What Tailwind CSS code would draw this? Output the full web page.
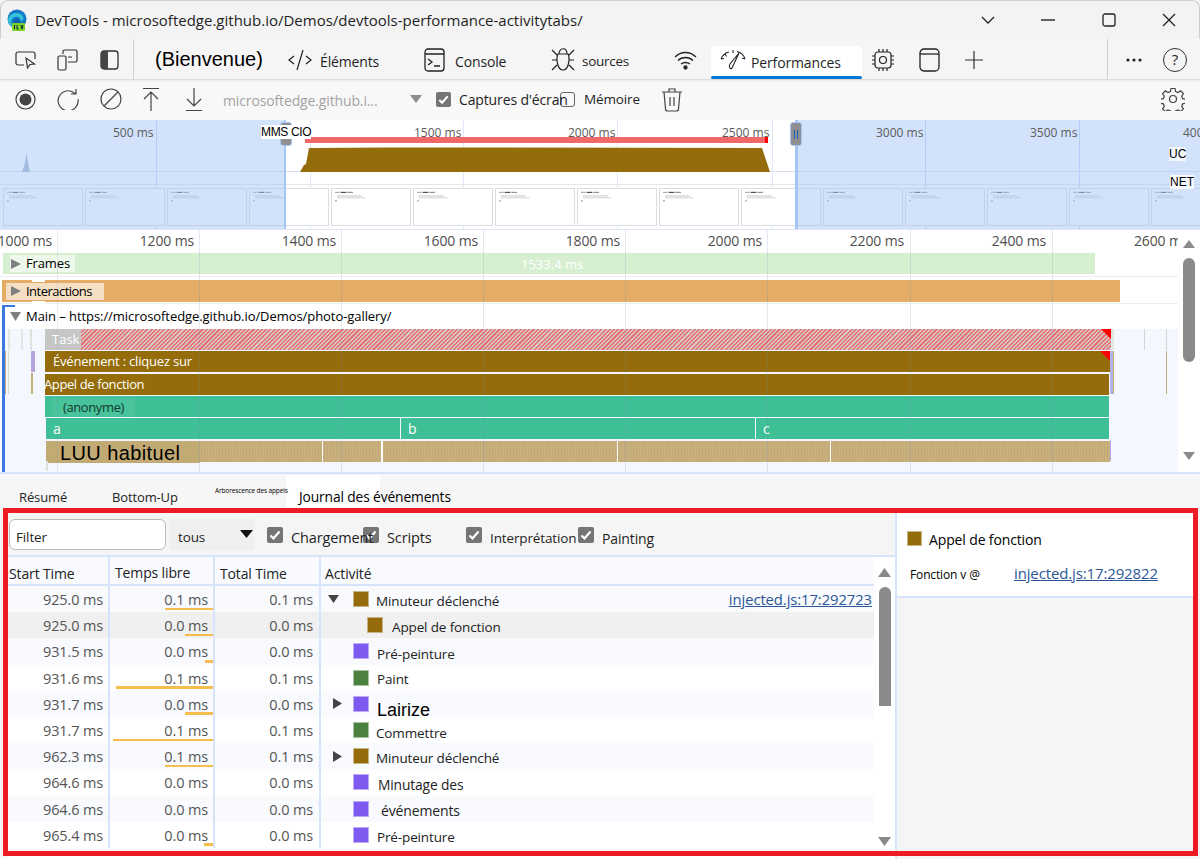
<!DOCTYPE html>
<html lang="fr"><head><meta charset="utf-8"><title>DevTools</title>
<script src="https://cdn.jsdelivr.net/npm/@tailwindcss/browser@4"></script></head>
<body class="m-0 bg-white">
<svg class="absolute w-0 h-0"><defs>
<symbol id="t" viewBox="0 0 80 38"><rect x="2" y="3" width="5" height="1" fill="#999"/><rect x="8" y="3" width="6" height="1" fill="#222"/><rect x="15" y="3" width="6" height="1" fill="#777"/><rect x="4" y="7" width="26" height=".7" fill="#aaa"/><rect x="4" y="9" width="30" height=".7" fill="#bbb"/><rect x="2" y="12" width="2" height="1" fill="#888"/></symbol>
<symbol id="ck" viewBox="0 0 16 16"><path d="M3.5 8.5l3 3 6-7" fill="none" stroke="#fff" stroke-width="2.2"/></symbol>
</defs></svg>
<div class="relative w-[1200px] h-[859px] overflow-hidden flex flex-col bg-[#f5f5f5] font-['Open_Sans',sans-serif] text-[#1f1f1f] border-[#c9c9c9]">

<!-- title bar -->
<div class="h-[39px] shrink-0 flex items-center bg-[#f3f3f3] rounded-t-lg border-t border-x border-[#cfcfcf]">
 <svg class="ml-[6px] w-[20px] h-[22px] shrink-0" viewBox="0 0 20 22"><circle cx="10" cy="10" r="9.5" fill="#1279c9"/><path d="M1 11C2 4 10 2 15 6c3 3 1 6-2 6 1-3-2-5-5-4-4 1-5 6-2 10C3 17 1 14 1 11z" fill="#35c1d8"/><path d="M8 10c3-1 5 0 5 2-1 2 2 3 5 1-1 3-4 6-8 6-4-1-5-6-2-9z" fill="#0f5fae"/><rect x="5" y="14" width="13" height="8" rx="1" fill="#7bd32a"/><path d="M7.500 16v4M10 16v4h1.500M14 16l1 4 1-4" stroke="#124" stroke-width="1" fill="none"/></svg>
 <div class="ml-[8px] w-[560px] whitespace-nowrap text-[15px] leading-[20px] -mt-[1px]">DevTools - microsoftedge.github.io/Demos/devtools-performance-activitytabs/</div>
 <svg class="ml-[385px] w-[16px] h-[16px] shrink-0" viewBox="0 0 16 16"><path d="M2 5l6 6 6-6" fill="none" stroke="#222" stroke-width="1.300"/></svg>
 <svg class="ml-[44px] w-[16px] h-[16px] shrink-0" viewBox="0 0 16 16"><path d="M1 8h14" stroke="#222" stroke-width="1.400"/></svg>
 <svg class="ml-[46px] w-[14px] h-[14px] shrink-0" viewBox="0 0 14 14"><rect x="1" y="1" width="12" height="12" rx="2" fill="none" stroke="#222" stroke-width="1.300"/></svg>
 <svg class="ml-[45px] w-[16px] h-[16px] shrink-0" viewBox="0 0 16 16"><path d="M2 2l12 12M14 2L2 14" stroke="#222" stroke-width="1.300"/></svg>
</div>

<!-- tab bar -->
<div class="relative h-[41px] shrink-0 flex items-center bg-[#f5f5f5] border-b border-[#dcdcdc] shadow-[0_1px_2px_#0000000f] text-[14px] tracking-[-0.01em]">
 <svg class="ml-[15px] mt-[1px] w-[22px] h-[20px] shrink-0" viewBox="0 0 22 20" fill="none" stroke="#333" stroke-width="1.200"><path d="M9 15H3a2 2 0 0 1-2-2V4a2 2 0 0 1 2-2h15a2 2 0 0 1 2 2v5"/><path d="M11 8l1.500 10 2.500-3.500 4.500-.500z"/></svg>
 <svg class="ml-[20px] mt-[1px] w-[22px] h-[22px] shrink-0" viewBox="0 0 22 22" fill="none" stroke="#333" stroke-width="1.200"><rect x="1" y="7" width="8" height="14" rx="1.500"/><path d="M6 5V2.500A1.500 1.500 0 0 1 7.500 1h11A1.500 1.500 0 0 1 20 2.500v9a1.500 1.500 0 0 1-1.500 1.500H11M11 8h4"/></svg>
 <svg class="ml-[21px] mt-[1px] w-[19px] h-[20px] shrink-0" viewBox="0 0 19 20"><rect x="1" y="1" width="17" height="18" rx="3" fill="none" stroke="#333" stroke-width="1.300"/><path d="M3 1h5v18H3a2 2 0 0 1-2-2V3a2 2 0 0 1 2-2z" fill="#444"/></svg>
 <div class="ml-[14px] w-px h-[40px] bg-[#d0d0d0]"></div>
 <div class="ml-[21px] w-[110px] text-[20px] font-['Liberation_Sans',sans-serif] tracking-normal whitespace-nowrap leading-[26px] text-black">(Bienvenue)</div>
 <svg class="ml-[23px] mt-[1px] w-[24px] h-[24px] shrink-0" viewBox="0 0 24 24" fill="none" stroke="#222" stroke-width="1.200"><path d="M6 8l-5 4 5 4M18 8l5 4-5 4M15 2L9 22"/></svg>
 <div class="ml-[8px] w-[60px] whitespace-nowrap mt-[4px]">Éléments</div>
 <svg class="ml-[44px] mt-[1px] w-[21px] h-[24px] shrink-0" viewBox="0 0 21 24" fill="none" stroke="#222" stroke-width="1.300"><rect x="1" y="1" width="19" height="22" rx="3"/><path d="M1 6h19M4 11l4 3-4 3M10 18h6"/></svg>
 <div class="ml-[10px] w-[54px] whitespace-nowrap mt-[4px]">Console</div>
 <svg class="ml-[42px] mt-[1px] w-[24px] h-[24px] shrink-0" viewBox="0 0 24 24" fill="none" stroke="#222" stroke-width="1.200"><path d="M8 6c0-7 8-7 8 0M7 6h10c2 4 1 16-5 16S5 10 7 6zM1 2l5 5M23 2l-5 5M1 12h5M18 12h5M1 22l5-5M23 22l-5-5"/></svg>
 <div class="ml-[7px] w-[50px] whitespace-nowrap mt-[4px] text-[13.500px] tracking-[-0.02em]">sources</div>
 <svg class="ml-[42px] mt-[1px] w-[23px] h-[20px] shrink-0" viewBox="0 0 23 20" fill="none" stroke="#222" stroke-width="1.300"><path d="M1 7c6-6 15-6 21 0M4 10.500c4-4 11-4 15 0M7 14c3-2 6-2 9 0"/><circle cx="11.500" cy="17.500" r="1.500" fill="#222"/></svg>
 <div class="relative ml-[14px] w-[151px] h-[33px] self-end flex items-center bg-white rounded-t-sm">
  <svg class="ml-[9px] w-[26px] h-[22px] shrink-0 -mt-[5px]" viewBox="0 0 26 22" fill="none" stroke="#222" stroke-width="1.100"><path d="M1 10C2 7 5 4 9 3M17 2.500c4 1 7 4 8 7.500M5 5l1.500 2.500M1 10l3-.5M13 1v3M25 10l-3-1M12 19l7-15-9 11c-2 3 1 6 2 4z"/></svg>
  <div class="ml-[5px] w-[95px] whitespace-nowrap -mt-[1px]">Performances</div>
  <div class="absolute left-0 right-0 bottom-0 h-[3px] bg-[#0078d4] rounded-full"></div>
 </div>
 <svg class="ml-[9px] mt-[1px] w-[24px] h-[24px] shrink-0" viewBox="0 0 24 24" fill="none" stroke="#222" stroke-width="1.200"><rect x="4" y="4" width="16" height="16" rx="3"/><circle cx="12" cy="12" r="3.500"/><path d="M8 1v3M12 1v3M16 1v3M8 20v3M12 20v3M16 20v3M1 8h3M1 12h3M1 16h3M20 8h3M20 12h3M20 16h3"/></svg>
 <svg class="ml-[24px] mt-[1px] w-[21px] h-[24px] shrink-0" viewBox="0 0 21 24" fill="none" stroke="#222" stroke-width="1.300"><rect x="1" y="1" width="19" height="22" rx="4"/><path d="M1 6h19"/></svg>
 <svg class="ml-[24px] mt-[1px] w-[20px] h-[20px] shrink-0" viewBox="0 0 20 20" fill="none" stroke="#333" stroke-width="1.200"><path d="M10 1v18M1 10h18"/></svg>
 <div class="ml-[123px] w-px h-[40px] bg-[#d0d0d0]"></div>
 <svg class="ml-[17px] mt-[1px] w-[18px] h-[6px] shrink-0" viewBox="0 0 18 6" fill="#222"><circle cx="3" cy="3" r="1.600"/><circle cx="9" cy="3" r="1.600"/><circle cx="15" cy="3" r="1.600"/></svg>
 <div class="ml-[20px] w-[24px] h-[24px] shrink-0 rounded-full border border-[#333] flex items-center justify-center text-[15px] tracking-normal leading-none mt-[1px] text-[#222]">?</div>
</div>

<!-- toolbar -->
<div class="h-[40px] shrink-0 flex items-center bg-[#f8f8f8] text-[13.500px] tracking-[-0.01em]">
 <svg class="ml-[15px] -mt-[2px] w-[21px] h-[21px] shrink-0" viewBox="0 0 21 21"><circle cx="10.500" cy="10.500" r="9.500" fill="none" stroke="#444" stroke-width="1.200"/><circle cx="10.500" cy="10.500" r="6" fill="#444"/></svg>
 <svg class="ml-[21px] -mt-[2px] w-[22px] h-[22px] shrink-0" viewBox="0 0 22 22" fill="none" stroke="#444" stroke-width="1.200"><path d="M18 5.500A10 10 0 1 0 21 11M19 1v5h-5"/></svg>
 <svg class="ml-[21px] -mt-[2px] w-[22px] h-[22px] shrink-0" viewBox="0 0 22 22" fill="none" stroke="#444" stroke-width="1.200"><circle cx="11" cy="11" r="10"/><path d="M18 4L4 18"/></svg>
 <svg class="ml-[19px] -mt-[2px] w-[20px] h-[24px] shrink-0" viewBox="0 0 20 24" fill="none" stroke="#444" stroke-width="1.200"><path d="M2 1.500h16M10 24V6M3 12l7-7 7 7"/></svg>
 <svg class="ml-[23px] -mt-[1px] w-[20px] h-[24px] shrink-0" viewBox="0 0 20 24" fill="none" stroke="#444" stroke-width="1.200"><path d="M2 22.500h16M10 0v18M3 11l7 7 7-7"/></svg>
 <div class="ml-[19px] w-[187px] whitespace-nowrap text-[#a3a3a3] text-[14px]">microsoftedge.github.i...</div>
 <svg class="w-[12px] h-[8px] shrink-0 -mt-[3px]" viewBox="0 0 12 8"><path d="M0 0h12L6 8z" fill="#8e8e8e"/></svg>
 <div class="ml-[14px] -mt-[2px] w-[15px] h-[15px] shrink-0 rounded-[2px] bg-[#757575]"><svg class="w-full h-full"><use href="#ck"/></svg></div>
 <div class="relative z-10 ml-[8px] w-[101px] -mt-[2px] whitespace-nowrap text-[14px]">Captures d'écran</div>
 <div class="-mt-[1px] w-[15px] h-[15px] shrink-0 rounded-[3px] border border-[#666] bg-transparent"></div>
 <div class="ml-[9px] w-[60px] -mt-[2px] whitespace-nowrap">Mémoire</div>
 <svg class="ml-[17px] -mt-[1px] w-[22px] h-[24px] shrink-0" viewBox="0 0 22 24" fill="none" stroke="#444" stroke-width="1.200"><path d="M1 4h20M8 4V1h6v3M3 4l1.500 17a2 2 0 0 0 2 2h9a2 2 0 0 0 2-2L19 4M9 9v9M13 9v9"/></svg>
 <svg class="ml-[478px] -mt-[2px] w-[24px] h-[24px] shrink-0" viewBox="0 0 24 24" fill="none" stroke="#444" stroke-width="1.200"><circle cx="12" cy="12" r="3.500"/><path d="M10 1.500h4l.6 3 2.400 1 2.600-1.700 2.800 2.800-1.700 2.600 1 2.400 3 .6v4l-3 .6-1 2.400 1.700 2.600-2.800 2.800-2.600-1.700-2.400 1-.6 3h-4l-.6-3-2.400-1-2.600 1.700-2.800-2.800 1.700-2.600-1-2.400-3-.6v-4l3-.6 1-2.400-1.700-2.600 2.800-2.800 2.600 1.700 2.400-1z"/></svg>
</div>

<!-- overview -->
<div class="relative h-[109px] shrink-0 bg-white overflow-hidden text-[12px] text-[#5c5c5c] tracking-normal">
 <div class="absolute top-[51px] left-0 right-0 h-px bg-[#d6dfee]"></div>
 <div class="absolute top-[64px] left-0 right-0 h-px bg-[#e6e6e6]"></div>
 <div class="absolute top-0 bottom-0 left-[156px] w-px bg-[#c4d7f7]"></div>
 <div class="absolute top-0 bottom-0 left-[310px] w-px bg-[#dfe9fa]"></div>
 <div class="absolute top-0 bottom-0 left-[463px] w-px bg-[#dfe9fa]"></div>
 <div class="absolute top-0 bottom-0 left-[617px] w-px bg-[#dfe9fa]"></div>
 <div class="absolute top-0 bottom-0 left-[772px] w-px bg-[#dfe9fa]"></div>
 <div class="absolute top-0 bottom-0 left-[925px] w-px bg-[#c4d7f7]"></div>
 <div class="absolute top-0 bottom-0 left-[1079px] w-px bg-[#c4d7f7]"></div>
 <div class="absolute top-[68px] left-[3px] flex gap-[2px]">
  <div class="w-[80px] h-[38px] shrink-0 border border-[#ddd] bg-white"><svg class="w-full h-full"><use href="#t"/></svg></div>
  <div class="w-[80px] h-[38px] shrink-0 border border-[#ddd] bg-white"><svg class="w-full h-full"><use href="#t"/></svg></div>
  <div class="w-[80px] h-[38px] shrink-0 border border-[#ddd] bg-white"><svg class="w-full h-full"><use href="#t"/></svg></div>
  <div class="w-[80px] h-[38px] shrink-0 border border-[#ddd] bg-white"><svg class="w-full h-full"><use href="#t"/></svg></div>
  <div class="w-[80px] h-[38px] shrink-0 border border-[#ddd] bg-white"><svg class="w-full h-full"><use href="#t"/></svg></div>
  <div class="w-[80px] h-[38px] shrink-0 border border-[#ddd] bg-white"><svg class="w-full h-full"><use href="#t"/></svg></div>
  <div class="w-[80px] h-[38px] shrink-0 border border-[#ddd] bg-white"><svg class="w-full h-full"><use href="#t"/></svg></div>
  <div class="w-[80px] h-[38px] shrink-0 border border-[#ddd] bg-white"><svg class="w-full h-full"><use href="#t"/></svg></div>
  <div class="w-[80px] h-[38px] shrink-0 border border-[#ddd] bg-white"><svg class="w-full h-full"><use href="#t"/></svg></div>
  <div class="w-[80px] h-[38px] shrink-0 border border-[#ddd] bg-white"><svg class="w-full h-full"><use href="#t"/></svg></div>
  <div class="w-[80px] h-[38px] shrink-0 border border-[#ddd] bg-white"><svg class="w-full h-full"><use href="#t"/></svg></div>
  <div class="w-[80px] h-[38px] shrink-0 border border-[#ddd] bg-white"><svg class="w-full h-full"><use href="#t"/></svg></div>
  <div class="w-[80px] h-[38px] shrink-0 border border-[#ddd] bg-white"><svg class="w-full h-full"><use href="#t"/></svg></div>
  <div class="w-[80px] h-[38px] shrink-0 border border-[#ddd] bg-white"><svg class="w-full h-full"><use href="#t"/></svg></div>
  <div class="w-[80px] h-[38px] shrink-0 border border-[#ddd] bg-white"><svg class="w-full h-full"><use href="#t"/></svg></div>
 </div>
 <!-- chart -->
 <svg class="absolute left-0 top-0 w-[1200px] h-[60px]" viewBox="0 0 1200 60"><path d="M22 52l3-9 1.500-10 1.500 10 2 9z" fill="#9fb0c9"/><path d="M300 52l4-7 2-1 3-16h2c150-1 300 0 451 0l3 9 5 15z" fill="#946c09"/><rect x="305" y="17" width="463" height="6" fill="#f06868"/><rect x="765" y="17" width="3" height="6" fill="#ff0000"/></svg>
 <div class="absolute top-0 bottom-0 left-0 w-[285px] bg-[#a6c5f7]/50"></div>
 <div class="absolute top-0 bottom-0 left-[796px] right-0 bg-[#a6c5f7]/50"></div>
 <div class="absolute top-0 bottom-0 left-[284px] w-[2px] bg-[#a6c5f7]"></div>
 <div class="absolute top-0 bottom-0 left-[795px] w-[3px] bg-[#a6c5f7]"></div>
 <div class="absolute left-[113px] top-[4px] whitespace-nowrap">500 ms</div>
 <div class="absolute left-[414px] top-[4px] whitespace-nowrap">1500 ms</div>
 <div class="absolute left-[568px] top-[4px] whitespace-nowrap">2000 ms</div>
 <div class="absolute left-[722px] top-[4px] whitespace-nowrap">2500 ms</div>
 <div class="absolute left-[876px] top-[4px] whitespace-nowrap">3000 ms</div>
 <div class="absolute left-[1030px] top-[4px] whitespace-nowrap">3500 ms</div>
 <div class="absolute left-[1183px] top-[4px] whitespace-nowrap">4000 ms</div>
 <div class="absolute left-[280px] top-[2px] w-[12px] h-[24px] rounded-[3px] bg-[#8f8f8f] border border-[#a6c5f7]"></div>
 <div class="absolute left-[790px] top-[2px] w-[12px] h-[24px] rounded-[3px] bg-[#8f8f8f] border border-[#a6c5f7] flex items-center justify-center gap-[2px]"><span class="w-px h-[9px] bg-[#1a5fc4]"></span><span class="w-px h-[9px] bg-[#1a5fc4]"></span></div>
 <div class="absolute left-[261px] top-[5px] bg-white text-[12px] text-black font-['Liberation_Sans',sans-serif] leading-[14px] whitespace-nowrap tracking-[-0.03em]">MMS CIO</div>
 <div class="absolute left-[1169px] top-[27px] bg-white/70 text-[12px] text-black font-['Liberation_Sans',sans-serif] leading-[14px]">UC</div>
 <div class="absolute left-[1170px] top-[55px] bg-white/80 text-[12px] text-black font-['Liberation_Sans',sans-serif] leading-[14px]">NET</div>
</div>

<!-- timeline -->
<div class="relative h-[243px] shrink-0 bg-white border-t border-[#dce7fa] overflow-hidden text-[13px]">
 <!-- ruler -->
 <div class="h-[22px] flex w-[1178px] overflow-hidden text-[14px] text-[#4f4f4f] leading-[21px] tracking-[-0.01em]">
  <div class="w-[52px] text-right shrink-0 whitespace-nowrap flex justify-end">1000 ms</div>
  <div class="w-[142px] text-right shrink-0 whitespace-nowrap">1200 ms</div>
  <div class="w-[142px] text-right shrink-0 whitespace-nowrap">1400 ms</div>
  <div class="w-[142px] text-right shrink-0 whitespace-nowrap">1600 ms</div>
  <div class="w-[142px] text-right shrink-0 whitespace-nowrap">1800 ms</div>
  <div class="w-[142px] text-right shrink-0 whitespace-nowrap">2000 ms</div>
  <div class="w-[142px] text-right shrink-0 whitespace-nowrap">2200 ms</div>
  <div class="w-[142px] text-right shrink-0 whitespace-nowrap">2400 ms</div>
  <div class="ml-[88px] shrink-0 whitespace-nowrap">2600 ms</div>
 </div>
 <!-- frames -->
 <div class="relative mt-[1px] ml-[3px] w-[1092px] h-[21px] bg-[#d7efd1] flex items-center">
  <div class="ml-[7px] h-[17px] w-[65px] bg-[#eef8eb] flex items-center">
   <svg class="ml-[1px] w-[10px] h-[10px] shrink-0" viewBox="0 0 10 10"><path d="M0 0l10 5-10 5z" fill="#808080"/></svg>
   <span class="ml-[5px] text-black tracking-[-0.01em] leading-none">Frames</span>
  </div>
  <span class="absolute left-[518px] top-[2px] text-white text-[13px]">1533.4 ms</span>
 </div>
 <div class="mt-[2px] h-px w-[1178px] bg-[#eeeeee]"></div>
 <!-- interactions -->
 <div class="relative mt-[3px] ml-[2px] w-[1118px] h-[22px] bg-[#e3ad66] flex items-center">
  <div class="relative ml-[4px] h-[17px] w-[98px] bg-[#f4dfc4] flex items-center">
   <div class="absolute left-[26px] -top-[4px] w-[13px] h-[3px] bg-white"></div>
   <div class="absolute left-[26px] -bottom-[4px] w-[13px] h-[3px] bg-white"></div>
   <svg class="ml-[5px] w-[10px] h-[10px] shrink-0" viewBox="0 0 10 10"><path d="M0 0l10 5-10 5z" fill="#808080"/></svg>
   <span class="ml-[5px] text-black tracking-[-0.04em] leading-none">Interactions</span>
  </div>
 </div>
 <div class="mt-[1px] h-px w-[1178px] bg-[#eeeeee]"></div>
 <!-- main -->
 <div class="relative h-[25px] flex items-center">
  <svg class="ml-[10px] w-[11px] h-[9px] shrink-0" viewBox="0 0 11 9"><path d="M0 0h11L5.500 9z" fill="#808080"/></svg>
  <span class="ml-[5px] text-black tracking-[-0.005em] whitespace-nowrap">Main – https://microsoftedge.github.io/Demos/photo-gallery/</span>
 </div>
 <div class="relative h-[144px] w-[1176px] ml-[2px] bg-[#f4f8fe] overflow-hidden">
  <div class="relative ml-[43px] w-[1066px] h-[21px] mb-[1.330px] flex bg-[repeating-linear-gradient(135deg,#e57474_0,#e57474_1.500px,#d8c4c4_1.500px,#d8c4c4_3px)]">
   <div class="w-[36px] h-full bg-[#c6c6c6] text-white pl-[7px] leading-[21px]">Task</div>
   <div class="absolute right-0 top-0 w-0 h-0 border-t-[10px] border-t-[#ff0000] border-l-[10px] border-l-transparent"></div>
  </div>
  <div class="relative ml-[43px] w-[1065px] h-[21px] mb-[1.330px] bg-[#946c09] text-white pl-[8px] leading-[21px] whitespace-nowrap tracking-[-0.015em]">Événement : cliquez sur
   <div class="absolute right-0 top-0 w-0 h-0 border-t-[10px] border-t-[#ff0000] border-l-[10px] border-l-transparent"></div>
  </div>
  <div class="ml-[43px] w-[1064px] h-[21px] mb-[1.330px] bg-[#946c09] text-white leading-[21px] whitespace-nowrap tracking-[-0.03em] -indent-px">Appel de fonction</div>
  <div class="ml-[43px] w-[1064px] h-[21px] mb-[1.330px] bg-[#3fbf95]"><div class="ml-[7px] w-[83px] h-[21px] bg-[#48c39b] text-[#14382c] pl-[11px] leading-[23px] whitespace-nowrap tracking-[-0.03em]">(anonyme)</div></div>
  <div class="ml-[44px] w-[1063px] h-[21px] mb-[1.330px] flex text-white text-[14px] leading-[21px] gap-px">
   <div class="w-[354px] bg-[#3fbf95] pl-[7px]">a</div><div class="w-[354px] bg-[#3fbf95] pl-[7px]">b</div><div class="flex-1 bg-[#3fbf95] pl-[7px]">c</div>
  </div>
  <div class="relative ml-[44px] w-[1064px] h-[21px] flex bg-[repeating-linear-gradient(90deg,#c8b07e_0,#c8b07e_2px,#c2a975_2px,#c2a975_3px)]">
   <div class="w-[154px] h-[22px] bg-[#c2aa74] text-[20px] text-black font-['Liberation_Sans',sans-serif] pl-[14px] leading-[24px] whitespace-nowrap tracking-[0.02em]">LUU habituel</div>
   <div class="absolute left-[276px] top-0 w-[1px] h-full bg-white"></div>
   <div class="absolute left-[335px] top-0 w-[2px] h-full bg-white"></div>
   <div class="absolute left-[571px] top-0 w-[1px] h-full bg-white"></div>
   <div class="absolute left-[784px] top-0 w-[1px] h-full bg-white"></div>
  </div>
  <!-- small slices -->
  <div class="absolute left-[6px] top-0 w-[2px] h-[21px] bg-[#e4e4e4]"></div>
  <div class="absolute left-[19px] top-0 w-[2px] h-[21px] bg-[#e4e4e4]"></div>
  <div class="absolute left-[28px] top-0 w-[2px] h-[21px] bg-[#e0e0e0]"></div>
  <div class="absolute left-[3px] top-[22px] w-px h-[43px] bg-[#c6ad79]"></div>
  <div class="absolute left-[6px] top-[22px] w-px h-[43px] bg-[#d6ddc0]"></div>
  <div class="absolute left-[29px] top-[22px] w-[4px] h-[21px] bg-[#b3a4dc]"></div>
  <div class="absolute left-[29px] top-[44px] w-[2px] h-[21px] bg-[#c6ad79]"></div>
  <div class="absolute left-[1109px] top-0 w-[3px] h-[21px] bg-[#e4e4e4]"></div>
  <div class="absolute left-[1142px] top-0 w-px h-[21px] bg-[#d4d4d4]"></div>
  <div class="absolute left-[1164px] top-0 w-px h-[21px] bg-[#d4d4d4]"></div>
  <div class="absolute left-[1108px] top-[22px] w-[3px] h-[43px] bg-[#b3b3e6]"></div>
  <div class="absolute left-[1111px] top-[22px] w-px h-[43px] bg-[#c6ad79]"></div>
  <div class="absolute left-[1164px] top-[22px] w-px h-[43px] bg-[#c6ad79]"></div>
  <div class="absolute left-[1108px] top-[111px] w-px h-[21px] bg-[#b4a3f0]"></div>
  <div class="absolute left-[44px] top-[132px] w-[2px] h-[10px] bg-[#dedede]"></div>
 </div>
 <!-- time grid -->
 <div class="absolute top-0 bottom-0 left-[57px] w-px bg-[#6f8fbf]/15"></div>
 <div class="absolute top-0 bottom-0 left-[199px] w-px bg-[#6f8fbf]/20"></div>
 <div class="absolute top-0 bottom-0 left-[341px] w-px bg-[#6f8fbf]/20"></div>
 <div class="absolute top-0 bottom-0 left-[483px] w-px bg-[#6f8fbf]/20"></div>
 <div class="absolute top-0 bottom-0 left-[625px] w-px bg-[#6f8fbf]/20"></div>
 <div class="absolute top-0 bottom-0 left-[767px] w-px bg-[#6f8fbf]/20"></div>
 <div class="absolute top-0 bottom-0 left-[910px] w-px bg-[#6f8fbf]/20"></div>
 <div class="absolute top-0 bottom-0 left-[1052px] w-px bg-[#6f8fbf]/20"></div>
 <!-- bracket -->
 <div class="absolute left-[2px] top-[75px] w-[13px] h-[168px] border-l-[3px] border-t-[2px] border-[#3b78e0] border-b-0"></div>
 <!-- scrollbar -->
 <div class="absolute left-[1178px] top-0 bottom-0 w-[22px] bg-white flex flex-col items-center">
  <svg class="mt-[10px] w-[12px] h-[8px] shrink-0" viewBox="0 0 12 8"><path d="M6 0l6 8H0z" fill="#8a8a8a"/></svg>
  <div class="mt-[10px] w-[12px] h-[104px] rounded-full bg-[#8a8a8a] shrink-0"></div>
  <svg class="mt-[90px] w-[12px] h-[8px] shrink-0" viewBox="0 0 12 8"><path d="M0 0h12L6 8z" fill="#8a8a8a"/></svg>
 </div>
</div>

<!-- details tabs -->
<div class="relative h-[36px] shrink-0 flex items-end border-t-2 border-[#d5e3fb] bg-[#f6f6f6] text-[13px] tracking-[-0.01em]">
 <div class="ml-[19px] w-[93px] h-[20px] whitespace-nowrap">Résumé</div>
 <div class="w-[103px] h-[20px] whitespace-nowrap">Bottom-Up</div>
 <div class="relative z-10 h-[22px] w-[71px] text-[6.500px] tracking-[-0.02em] text-black whitespace-nowrap leading-[10px]">Arborescence des appels</div>
 <div class="w-[94px] h-[33px] bg-white pl-[13px] pt-[13px] whitespace-nowrap text-black text-[13.800px] leading-[18px]">Journal des événements</div>
</div>

<!-- bottom panel -->
<div class="flex flex-1 min-h-0 pl-[7px] pr-[7px] pt-[5px] text-[13.500px] tracking-[-0.01em] overflow-hidden">
 <div class="w-[888px] shrink-0 flex flex-col">
  <div class="h-[42px] shrink-0 flex items-center">
   <div class="ml-[2px] w-[157px] h-[31px] rounded-[6px] border border-[#bbbbbb] bg-white flex items-center pl-[6px] pt-[7px]">Filter</div>
   <div class="relative ml-[4px] w-[84px] h-[31px] rounded-[2px] bg-[#efefef] flex items-center pl-[8px] pt-[7px]">tous
    <svg class="absolute right-[1px] top-[11px] w-[13px] h-[8px]" viewBox="0 0 13 8"><path d="M0 0h13L6.500 8z" fill="#111"/></svg>
   </div>
   <div class="ml-[13px] w-[16px] h-[16px] rounded-[2px] bg-[#757575] shrink-0 mt-[1px]"><svg class="w-full h-full"><use href="#ck"/></svg></div>
   <div class="relative z-10 ml-[8px] w-[72px] whitespace-nowrap pt-[8px] text-[14.500px]">Chargement</div>
   <div class="w-[16px] h-[16px] rounded-[2px] bg-[#757575] shrink-0 mt-[1px] relative"><svg class="w-full h-full"><use href="#ck"/></svg></div>
   <div class="ml-[8px] w-[60px] whitespace-nowrap pt-[8px] text-[14.500px]">Scripts</div>
   <div class="w-[16px] h-[16px] rounded-[2px] bg-[#757575] shrink-0 mt-[1px] ml-[19px]"><svg class="w-full h-full"><use href="#ck"/></svg></div>
   <div class="relative z-10 ml-[8px] w-[88px] whitespace-nowrap pt-[8px] text-[13.500px]">Interprétation</div>
   <div class="w-[16px] h-[16px] rounded-[2px] bg-[#757575] shrink-0 mt-[1px]"><svg class="w-full h-full"><use href="#ck"/></svg></div>
   <div class="ml-[8px] whitespace-nowrap pt-[8px] text-[14px]">Painting</div>
  </div>
  <div class="flex flex-1 min-h-0 border-t-2 border-[#d5e3fb]">
   <div class="w-[867px] shrink-0 bg-white overflow-hidden">
    <div class="flex h-[29px] bg-[#f8fafe] border-b-2 border-[#d5e3fb] text-[14px] leading-[33px] text-[#222] whitespace-nowrap">
     <div class="w-[103px] border-r-2 border-[#d5e3fb] pl-[2px]">Start Time</div>
     <div class="w-[105px] border-r-2 border-[#d5e3fb] pl-[5px] leading-[31px]">Temps libre</div>
     <div class="w-[106px] border-r-2 border-[#d5e3fb] pl-[5px]">Total Time</div>
     <div class="flex-1 pl-[4px]">Activité</div>
    </div>
    <div class="flex h-[26.200px] bg-[#f8fafe] text-[#555] items-stretch text-[14.500px] leading-[28px]">
     <div class="w-[103px] border-r-2 border-[#d5e3fb] text-right pr-[5px]">925.0 ms</div>
     <div class="relative w-[105px] border-r-2 border-[#d5e3fb] text-right pr-[5px]">0.1 ms<div class="absolute bottom-[2px] right-0 h-[2.500px] w-[48px] bg-[#f4bd4c]"></div></div>
     <div class="w-[106px] border-r-2 border-[#d5e3fb] text-right pr-[6px]">0.1 ms</div>
     <div class="flex-1 flex items-center text-[#222] text-[13.500px]"><svg class="ml-[7px] mr-[14px] w-[11px] h-[8px] shrink-0" viewBox="0 0 11 8"><path d="M0 0h11L5.500 8z" fill="#444"/></svg><span class="w-[16px] h-[16px] shrink-0 bg-[#946c09] border border-[#c6b584]"></span><span class="ml-[7px] mt-[4px]">Minuteur déclenché</span><a class="ml-auto mr-[2px] text-[14.800px] text-[#2b5797] underline tracking-[-0.005em]">injected.js:17:292723</a></div>
    </div>
    <div class="flex h-[26.200px] bg-[#f0f0f0] text-[#555] items-stretch text-[14.500px] leading-[28px]">
     <div class="w-[103px] border-r-2 border-[#d5e3fb] text-right pr-[5px]">925.0 ms</div>
     <div class="relative w-[105px] border-r-2 border-[#d5e3fb] text-right pr-[5px]">0.0 ms<div class="absolute bottom-[2px] right-0 h-[2.500px] w-[28px] bg-[#f4bd4c]"></div></div>
     <div class="w-[106px] border-r-2 border-[#d5e3fb] text-right pr-[6px]">0.0 ms</div>
     <div class="flex-1 flex items-center text-[#222] text-[13.500px] pl-[46px]"><span class="w-[16px] h-[16px] shrink-0 bg-[#946c09] border border-[#c6b584]"></span><span class="ml-[9px] mt-[4px]">Appel de fonction</span></div>
    </div>
    <div class="flex h-[26.200px] bg-[#f8fafe] text-[#555] items-stretch text-[14.500px] leading-[28px]">
     <div class="w-[103px] border-r-2 border-[#d5e3fb] text-right pr-[5px]">931.5 ms</div>
     <div class="relative w-[105px] border-r-2 border-[#d5e3fb] text-right pr-[5px]">0.0 ms<div class="absolute bottom-[2px] right-0 h-[2.500px] w-[8px] bg-[#f4bd4c]"></div></div>
     <div class="w-[106px] border-r-2 border-[#d5e3fb] text-right pr-[6px]">0.0 ms</div>
     <div class="flex-1 flex items-center text-[#222] text-[13.500px] pl-[32px]"><span class="w-[16px] h-[16px] shrink-0 bg-[#7f5af0] border border-[#bbaaf6]"></span><span class="ml-[8px] mt-[5px]">Pré-peinture</span></div>
    </div>
    <div class="flex h-[26.200px] bg-white text-[#555] items-stretch text-[14.500px] leading-[28px]">
     <div class="w-[103px] border-r-2 border-[#d5e3fb] text-right pr-[5px]">931.6 ms</div>
     <div class="relative w-[105px] border-r-2 border-[#d5e3fb] text-right pr-[5px]">0.1 ms<div class="absolute bottom-[2px] right-0 h-[2.500px] w-[97px] bg-[#f4bd4c]"></div></div>
     <div class="w-[106px] border-r-2 border-[#d5e3fb] text-right pr-[6px]">0.1 ms</div>
     <div class="flex-1 flex items-center text-[#222] text-[13.500px] pl-[32px]"><span class="w-[16px] h-[16px] shrink-0 bg-[#4b8240] border border-[#a7c29f]"></span><span class="ml-[8px] mt-[3px]">Paint</span></div>
    </div>
    <div class="flex h-[26.200px] bg-[#f8fafe] text-[#555] items-stretch text-[14.500px] leading-[28px]">
     <div class="w-[103px] border-r-2 border-[#d5e3fb] text-right pr-[5px]">931.7 ms</div>
     <div class="relative w-[105px] border-r-2 border-[#d5e3fb] text-right pr-[5px]">0.0 ms<div class="absolute bottom-[2px] right-0 h-[2.500px] w-[28px] bg-[#f4bd4c]"></div></div>
     <div class="w-[106px] border-r-2 border-[#d5e3fb] text-right pr-[6px]">0.0 ms</div>
     <div class="flex-1 flex items-center text-[#222]"><svg class="ml-[12px] mr-[11px] w-[9px] h-[11px] shrink-0" viewBox="0 0 9 11"><path d="M0 0l9 5.500L0 11z" fill="#444"/></svg><span class="w-[16px] h-[16px] shrink-0 bg-[#7f5af0] border border-[#bbaaf6]"></span><span class="ml-[8px] mt-[12px] text-[18px] leading-[22px] font-['Liberation_Sans',sans-serif] text-black tracking-normal">Lairize</span></div>
    </div>
    <div class="flex h-[26.200px] bg-white text-[#555] items-stretch text-[14.500px] leading-[28px]">
     <div class="w-[103px] border-r-2 border-[#d5e3fb] text-right pr-[5px]">931.7 ms</div>
     <div class="relative w-[105px] border-r-2 border-[#d5e3fb] text-right pr-[5px]">0.1 ms<div class="absolute bottom-[2px] right-0 h-[2.500px] w-[100px] bg-[#f4bd4c]"></div></div>
     <div class="w-[106px] border-r-2 border-[#d5e3fb] text-right pr-[6px]">0.1 ms</div>
     <div class="flex-1 flex items-center text-[#222] text-[13.500px] pl-[32px]"><span class="w-[16px] h-[16px] shrink-0 bg-[#4b8240] border border-[#a7c29f]"></span><span class="ml-[7px] mt-[5px]">Commettre</span></div>
    </div>
    <div class="flex h-[26.200px] bg-[#f8fafe] text-[#555] items-stretch text-[14.500px] leading-[28px]">
     <div class="w-[103px] border-r-2 border-[#d5e3fb] text-right pr-[5px]">962.3 ms</div>
     <div class="relative w-[105px] border-r-2 border-[#d5e3fb] text-right pr-[5px]">0.1 ms<div class="absolute bottom-[2px] right-0 h-[2.500px] w-[48px] bg-[#f4bd4c]"></div></div>
     <div class="w-[106px] border-r-2 border-[#d5e3fb] text-right pr-[6px]">0.1 ms</div>
     <div class="flex-1 flex items-center text-[#222] text-[13.500px]"><svg class="ml-[12px] mr-[11px] w-[9px] h-[11px] shrink-0" viewBox="0 0 9 11"><path d="M0 0l9 5.500L0 11z" fill="#444"/></svg><span class="w-[16px] h-[16px] shrink-0 bg-[#946c09] border border-[#c6b584]"></span><span class="ml-[7px] mt-[3px]">Minuteur déclenché</span></div>
    </div>
    <div class="flex h-[26.200px] bg-white text-[#555] items-stretch text-[14.500px] leading-[28px]">
     <div class="w-[103px] border-r-2 border-[#d5e3fb] text-right pr-[5px]">964.6 ms</div>
     <div class="w-[105px] border-r-2 border-[#d5e3fb] text-right pr-[5px]">0.0 ms</div>
     <div class="w-[106px] border-r-2 border-[#d5e3fb] text-right pr-[6px]">0.0 ms</div>
     <div class="flex-1 flex items-center text-[#222] text-[13.800px] pl-[32px]"><span class="w-[16px] h-[16px] shrink-0 bg-[#7f5af0] border border-[#bbaaf6]"></span><span class="ml-[9px] mt-[5px]">Minutage des</span></div>
    </div>
    <div class="flex h-[26.200px] bg-[#f8fafe] text-[#555] items-stretch text-[14.500px] leading-[28px]">
     <div class="w-[103px] border-r-2 border-[#d5e3fb] text-right pr-[5px]">964.6 ms</div>
     <div class="w-[105px] border-r-2 border-[#d5e3fb] text-right pr-[5px]">0.0 ms</div>
     <div class="w-[106px] border-r-2 border-[#d5e3fb] text-right pr-[6px]">0.0 ms</div>
     <div class="flex-1 flex items-center text-[#222] text-[14px] pl-[32px]"><span class="w-[16px] h-[16px] shrink-0 bg-[#7f5af0] border border-[#bbaaf6]"></span><span class="ml-[12px] mt-[5px]">événements</span></div>
    </div>
    <div class="flex h-[26.200px] bg-white text-[#555] items-stretch text-[14.500px] leading-[28px]">
     <div class="w-[103px] border-r-2 border-[#d5e3fb] text-right pr-[5px]">965.4 ms</div>
     <div class="relative w-[105px] border-r-2 border-[#d5e3fb] text-right pr-[5px]">0.0 ms<div class="absolute bottom-[2px] right-0 h-[2.500px] w-[9px] bg-[#f4bd4c]"></div></div>
     <div class="w-[106px] border-r-2 border-[#d5e3fb] text-right pr-[6px]">0.0 ms</div>
     <div class="flex-1 flex items-center text-[#222] text-[13.500px] pl-[32px]"><span class="w-[16px] h-[16px] shrink-0 bg-[#7f5af0] border border-[#bbaaf6]"></span><span class="ml-[8px] mt-[5px]">Pré-peinture</span></div>
    </div>
   </div>
   <div class="flex-1 bg-white flex flex-col items-center">
    <svg class="mt-[11px] w-[13px] h-[9px] shrink-0" viewBox="0 0 13 9"><path d="M6.500 0L13 9H0z" fill="#8a8a8a"/></svg>
    <div class="mt-[10px] w-[12px] h-[119px] rounded-t-full bg-[#8a8a8a] shrink-0"></div>
    <svg class="mt-[131px] w-[13px] h-[9px] shrink-0" viewBox="0 0 13 9"><path d="M0 0h13L6.500 9z" fill="#8a8a8a"/></svg>
   </div>
  </div>
 </div>
 <div class="flex-1 border-l-2 border-[#d5e3fb]">
  <div class="h-[85px] bg-white border-b-2 border-[#d5e3fb]">
   <div class="flex items-center pt-[16px] pl-[10px]"><span class="w-[15px] h-[15px] shrink-0 bg-[#946c09] border border-[#c6b584] -mt-[2px]"></span><span class="ml-[7px] text-[14px] text-black">Appel de fonction</span></div>
   <div class="flex items-center mt-[12px] pl-[13px]"><span class="w-[104px] text-[12px] text-black whitespace-nowrap mt-[4px]">Fonction v @</span><a class="text-[15px] text-[#2b5797] underline">injected.js:17:292822</a></div>
  </div>
 </div>
</div>

<!-- highlight frame -->
<div class="absolute left-[3px] top-[508px] w-[1195px] h-[348px] border-[5px] border-[#ed1c24] pointer-events-none"></div>
</div>
</body></html>
